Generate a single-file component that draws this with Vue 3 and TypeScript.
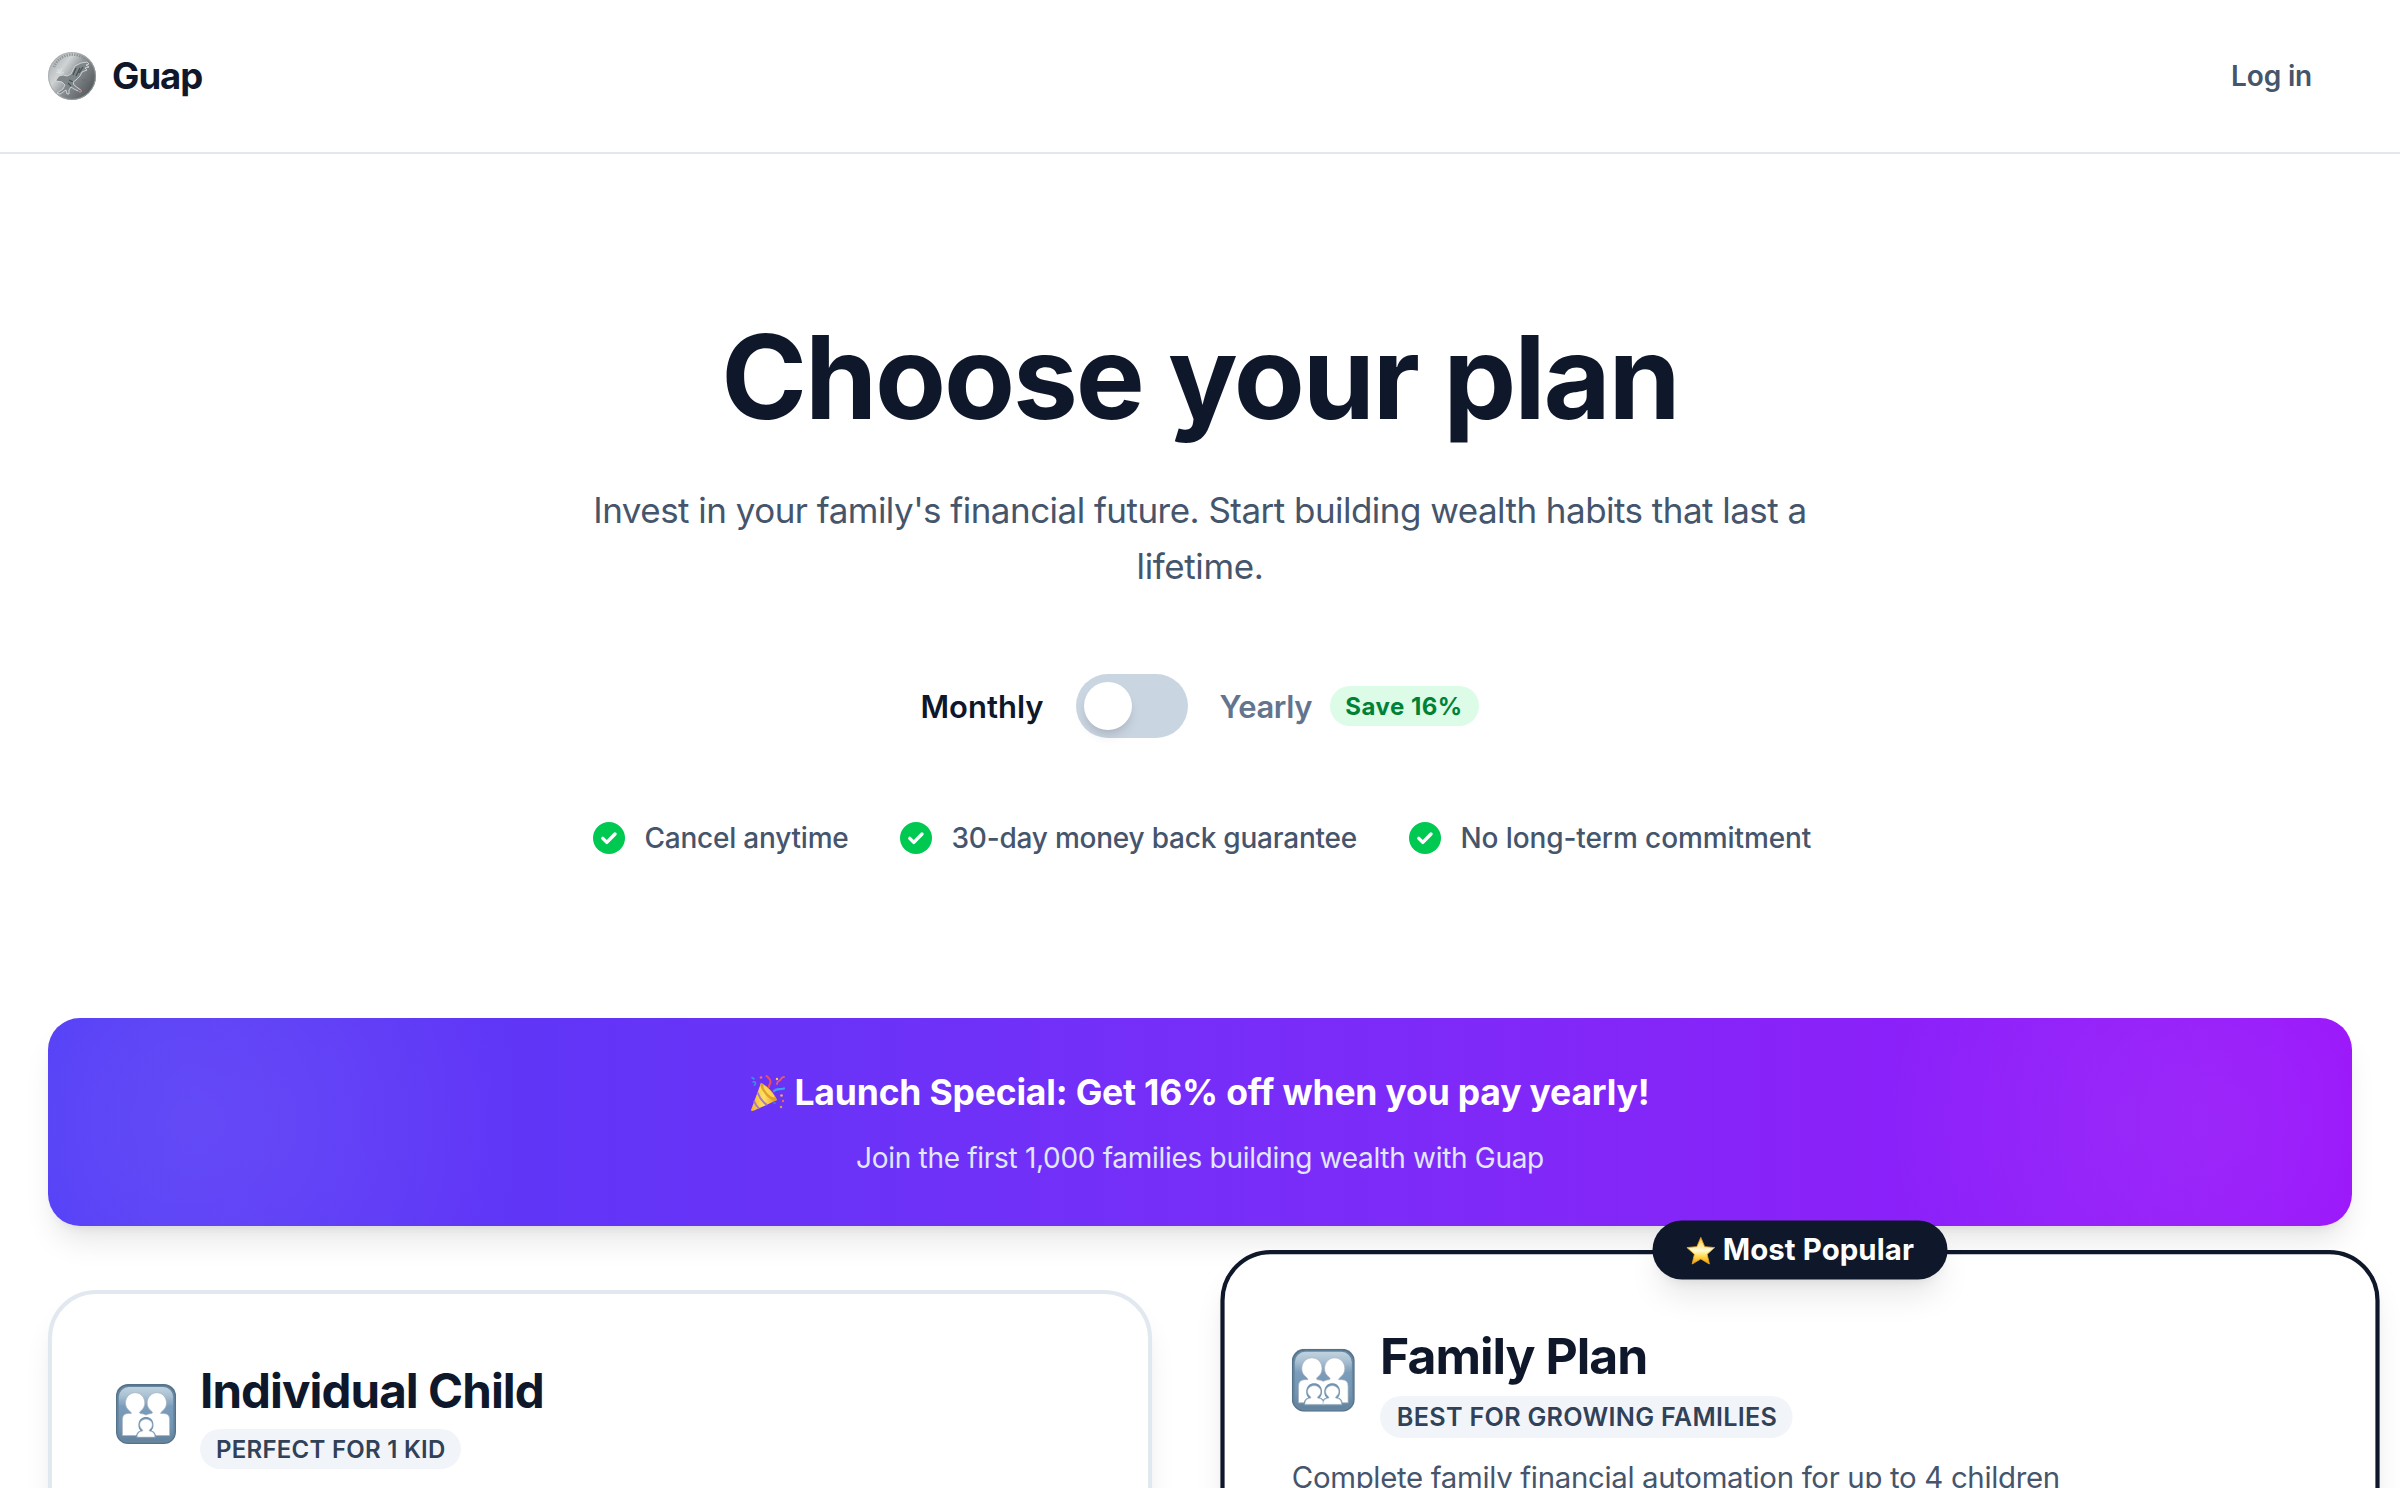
<script setup lang="ts">
import { ref } from 'vue'

interface Plan {
  id: string
  name: string
  tag: string
  kids: number[]
  popular: boolean
  description?: string
}

const yearly = ref(false)

const perks: { label: string; width: number; spacing: number }[] = [
  { label: 'Cancel anytime', width: 255, spacing: -0.22 },
  { label: '30-day money back guarantee', width: 457, spacing: -0.22 },
  { label: 'No long-term commitment', width: 401, spacing: -0.1 },
]

const plans: Plan[] = [
  { id: 'individual', name: 'Individual Child', tag: 'Perfect for 1 kid', kids: [30], popular: false },
  {
    id: 'family',
    name: 'Family Plan',
    tag: 'Best for growing families',
    kids: [21.3, 38.5],
    popular: true,
    description: 'Complete family financial automation for up to 4 children',
  },
]
</script>

<template>
  <div class="page">
    <header class="header">
      <div class="brand">
        <svg class="coin" viewBox="0 0 48 48">
          <defs>
            <linearGradient id="coin" x1="0" y1="0.1" x2="1" y2="0.8">
              <stop offset="0" stop-color="#a3a8aa" />
              <stop offset="0.32" stop-color="#cfd3d4" />
              <stop offset="0.58" stop-color="#858b8e" />
              <stop offset="1" stop-color="#4c5154" />
            </linearGradient>
          </defs>
          <circle cx="24" cy="24" r="24" fill="url(#coin)" />
          <circle cx="24" cy="24" r="23.4" fill="none" stroke="#a4a9ab" stroke-width=".8" />
          <path d="M6 15A20 20 0 0 1 37 7" fill="none" stroke="#7d8386" stroke-width="2.600" stroke-dasharray="1.4 1.1" opacity=".7" />
          <path d="M8 28l3-4 4-1 4 1 4-2 2-4 2-4 6-3 6-1 2 2-3 1 3 2-4 1 2 2-5 2-2 4-4 4-3 2 1 3 4 3 4 3-2 1-6-3-3-2-2 3 0 4-2 0-1-4-6 4-3-1 6-4 2-4-3-3-6-1z" fill="#7f8689" stroke="#dfe2e3" stroke-width=".8" stroke-linejoin="round" />
          <path d="M25 23l3-7M28 24l4-8M31 21l4-6M21 28l4 2M20 31l3 3" stroke="#474d50" stroke-width="1.200" fill="none" />
          <path d="M9 17l3 4 2-5M12 21l-4-1M12 22l4-2M11 17v3" stroke="#dfe3e4" stroke-width=".9" fill="none" />
          <path d="M34 28h8" stroke="#6a7073" stroke-width="2" stroke-dasharray="1.4 .7" />
          <path d="M30 39h6" stroke="#8c5055" stroke-width="1" />
        </svg>
        <span class="brand-name">Guap</span>
      </div>
      <a class="login">Log in</a>
    </header>

    <main>
      <section class="hero">
        <h1>Choose your plan</h1>
        <p class="lead">
          <span class="lead-a">Invest in your family's financial future. Start building wealth habits that last a</span>
          <span class="lead-b">lifetime.</span>
        </p>

        <div class="billing">
          <span class="monthly">Monthly</span>
          <button class="toggle" :class="{ on: yearly }" @click="yearly = !yearly"><i class="knob"></i></button>
          <span class="yearly">Yearly</span>
          <span class="save">Save 16%</span>
        </div>

        <ul class="perks">
          <li v-for="p in perks" :key="p.label" :style="{ width: p.width + 'px', letterSpacing: p.spacing + 'px' }">
            <svg class="check" viewBox="0 0 32 32">
              <circle cx="16" cy="16" r="16" fill="#00c951" />
              <path d="M9.800 16.400l4 4 8.200-8.400" fill="none" stroke="#fff" stroke-width="3.400" stroke-linecap="round" stroke-linejoin="round" />
            </svg>
            <span>{{ p.label }}</span>
          </li>
        </ul>
      </section>

      <section class="banner">
        <h2>
          <svg class="party" viewBox="0 0 36 36">
            <defs>
              <linearGradient id="cone" x1="0" y1="0" x2="1" y2="0">
                <stop offset="0" stop-color="#f3b52c" />
                <stop offset="0.5" stop-color="#ffe066" />
                <stop offset="1" stop-color="#e89a1c" />
              </linearGradient>
            </defs>
            <path d="M1 35L11 8c5 2 13 10 16 17L4 35.600q-3 .8-3-.6z" fill="url(#cone)" />
            <path d="M7.500 17.500q3 8 9.500 12.500M4 26q2 5 5 7.500" fill="none" stroke="#a678c8" stroke-width="2" />
            <path d="M11 8c5 2 13 10 16 17-3 2-8-1-12-6S9.500 9.500 11 8z" fill="#dda02a" />
            <path d="M13.500 10c4 2 9 7 11.500 12.500-3 0-6-2-8.500-5s-3.500-5.500-3-7.500z" fill="#ffd351" />
            <path d="M19 12c0-4 3-4 1-7-.6-1.600-2-2.500-3.500-4" fill="none" stroke="#ef4b5f" stroke-width="2" stroke-linecap="round" />
            <path d="M24 16c3-3 5-1 10-2.500" fill="none" stroke="#3ea0ee" stroke-width="2.200" stroke-linecap="round" />
            <path d="M27 9c0-4 3-2 4-5 .4-1 1.500-2 3-2" fill="none" stroke="#ee5a6b" stroke-width="1.800" stroke-linecap="round" />
            <path d="M3 7c3-1 3 2 1.500 3M2 2.500l2 1.500" fill="none" stroke="#3f8fe0" stroke-width="1.600" stroke-linecap="round" />
            <circle cx="11" cy="2.500" r="1.300" fill="#ef6a70" /><circle cx="27" cy="4" r="1.200" fill="#ffc83d" />
            <circle cx="31.500" cy="20.500" r="1.300" fill="#ffb02e" /><circle cx="24.500" cy="28" r="1.300" fill="#3b7be0" />
            <circle cx="33" cy="26" r="1.200" fill="#ef6a50" /><circle cx="31" cy="32" r="1.200" fill="#d8a03a" />
          </svg>
          <span>Launch Special: Get 16% off when you pay yearly!</span>
        </h2>
        <p>Join the first 1,000 families building wealth with Guap</p>
      </section>

      <section class="plans">
        <article v-for="plan in plans" :key="plan.id" class="card" :class="{ popular: plan.popular }">
          <div v-if="plan.popular" class="ribbon">
            <svg class="star" viewBox="0 0 28 27">
              <defs>
                <linearGradient id="star" x1="0" y1="0" x2="0" y2="1">
                  <stop offset="0" stop-color="#f5b52e" />
                  <stop offset="0.25" stop-color="#ffe48a" />
                  <stop offset="0.5" stop-color="#fffad0" />
                  <stop offset="0.72" stop-color="#ffd84a" />
                  <stop offset="1" stop-color="#f09a08" />
                </linearGradient>
              </defs>
              <path d="M14 1l3.700 8.800 9.500.9-7.100 6.400 2.100 9.300L14 21.500l-8.200 4.900 2.100-9.300L.8 10.700l9.500-.9z" fill="url(#star)" stroke="#e9a722" stroke-width=".8" stroke-linejoin="round" />
            </svg>
            <span>Most Popular</span>
          </div>

          <div class="card-head">
            <svg class="family" viewBox="0 0 60 60">
              <defs>
                <linearGradient :id="'tile-' + plan.id" x1="0" y1="0" x2="0" y2="1">
                  <stop offset="0" stop-color="#c0d2df" />
                  <stop offset="0.16" stop-color="#aac1d3" />
                  <stop offset="0.36" stop-color="#7b9dbb" />
                  <stop offset="0.75" stop-color="#7094b2" />
                  <stop offset="1" stop-color="#64829c" />
                </linearGradient>
              </defs>
              <rect width="60" height="60" rx="12" fill="#55728b" />
              <rect x="1.200" y="1.800" width="57.600" height="57" rx="11" fill="#67869f" />
              <rect x="2.800" y="3" width="54.400" height="54" rx="10" :fill="`url(#tile-${plan.id})`" />
              <path d="M6.400 51.500V35.500q0-6 6-6h3q-.2-1-1.200-2c-3-2.200-4.700-5-4.700-8.500 0-6 4.300-10.300 9.700-10.300S28.800 13 28.800 19c0 3.500-1.700 6.300-4.700 8.500-1 1-.6 1.800.4 2q3 .2 5.500 1.600 2.500-1.400 5.500-1.600c1-.2 1.400-1 .4-2-3-2.200-4.700-5-4.700-8.500 0-6 4.300-10.300 9.600-10.300S50.500 13 50.500 19c0 3.500-1.700 6.300-4.700 8.500-1 1-1.200 2-1.200 2h3q6 0 6 6v16z" fill="#fff" stroke="#a9b3bd" stroke-width=".7" />
              <path v-for="x in plan.kids" :key="'o' + x" :transform="`translate(${x} 0)`" d="M-10 54V53q0-5 4.500-6.500C-9 43.500-8.500 33 0 33S9 43.500 5.500 46.500Q10 48 10 53v1z" fill="#7094b2" />
              <path v-for="x in plan.kids" :key="'k' + x" :transform="`translate(${x} 0)`" d="M-8.800 53q0-5.200 4.800-5.700 1.500-.2.800-1.300c-1.700-1.300-3-3-3-5.200 0-3.200 2.800-5.500 6.200-5.500s6.200 2.300 6.200 5.500c0 2.200-1.300 3.900-3 5.200q-.7 1.100.8 1.300 4.800.5 4.800 5.700z" fill="#fff" stroke="#b4bec8" stroke-width=".5" />
            </svg>
            <div>
              <h3>{{ plan.name }}</h3>
              <span class="chip">{{ plan.tag }}</span>
            </div>
          </div>
          <p v-if="plan.description" class="desc">{{ plan.description }}</p>
        </article>
      </section>
    </main>
  </div>
</template>

<style>
body {
  margin: 0;
  overflow: hidden;
}
</style>

<style scoped>
.page {
  height: 1488px;
  overflow: hidden;
  background: #fff;
  color: #0f172b;
  font-family: Inter, 'Liberation Sans', sans-serif;
  white-space: nowrap;
}
h1,
h2,
h3,
p,
ul {
  margin: 0;
  padding: 0;
}
svg {
  display: block;
  flex: none;
}
.header {
  height: 152px;
  border-bottom: 2px solid #e2e8f0;
  padding: 0 48px;
  display: flex;
  align-items: center;
  justify-content: space-between;
}
.brand {
  display: flex;
  align-items: center;
  gap: 16px;
}
.coin {
  width: 48px;
  height: 48px;
}
.brand-name {
  font-size: 36.5px;
  font-weight: 700;
  letter-spacing: -1px;
}
.login {
  padding-right: 40px;
  color: #45556c;
  font-size: 28px;
  font-weight: 600;
  letter-spacing: -0.17px;
}
.hero {
  display: flex;
  flex-direction: column;
  align-items: center;
  padding-top: 163px;
}
h1 {
  font-size: 116px;
  line-height: 120px;
  font-weight: 700;
  letter-spacing: -2.15px;
}
.lead {
  display: flex;
  flex-direction: column;
  align-items: center;
  margin-top: 45px;
  color: #45556c;
  font-size: 35px;
  line-height: 56px;
}
.lead-a {
  letter-spacing: -0.53px;
}
.lead-b {
  letter-spacing: -0.4px;
}
.billing {
  display: flex;
  align-items: center;
  height: 64px;
  margin-top: 80px;
  font-size: 31px;
  font-weight: 600;
}
.monthly {
  width: 123px;
}
.toggle {
  width: 112px;
  height: 64px;
  margin: 0 32px;
  padding: 8px;
  border: 0;
  border-radius: 32px;
  background: #cad5e2;
}
.toggle.on {
  background: #4f39f6;
}
.knob {
  display: block;
  width: 48px;
  height: 48px;
  border-radius: 50%;
  background: #fff;
  box-shadow: 0 8px 12px -2px rgba(0, 0, 0, 0.1), 0 4px 8px -4px rgba(0, 0, 0, 0.1);
}
.toggle.on .knob {
  margin-left: 48px;
}
.yearly {
  width: 94px;
  color: #62748e;
  letter-spacing: -0.4px;
}
.save {
  box-sizing: border-box;
  width: 149px;
  height: 40px;
  margin: 0 1px 0 16px;
  border-radius: 20px;
  background: #dcfce7;
  color: #008236;
  font-size: 24px;
  line-height: 41px;
  font-weight: 700;
  letter-spacing: 0.48px;
  text-align: center;
}
.perks {
  display: flex;
  gap: 52px;
  margin: 84px 0 0 2px;
  list-style: none;
  color: #45556c;
  font-size: 28px;
  line-height: 32px;
  font-weight: 500;
}
.perks li {
  display: flex;
  gap: 20px;
}
.check {
  width: 32px;
  height: 32px;
}
.banner {
  height: 208px;
  box-sizing: border-box;
  margin: 164px 48px 0;
  padding-top: 47px;
  border-radius: 32px;
  background:
    radial-gradient(circle 330px at 144px 104px, rgba(255, 255, 255, 0.09), rgba(255, 255, 255, 0.065) 35%, rgba(255, 255, 255, 0)),
    radial-gradient(circle 330px at 2160px 104px, rgba(255, 255, 255, 0.07), rgba(255, 255, 255, 0.05) 35%, rgba(255, 255, 255, 0)),
    linear-gradient(90deg in oklab, #4f39f6, #9810fa);
  box-shadow: 0 20px 30px -6px rgba(0, 0, 0, 0.1), 0 8px 12px -8px rgba(0, 0, 0, 0.1);
  color: #fff;
}
.banner h2 {
  display: flex;
  align-items: center;
  justify-content: center;
  gap: 8px;
  font-size: 35.5px;
  line-height: 56px;
  font-weight: 700;
  letter-spacing: -0.18px;
}
.party {
  width: 36px;
  height: 36px;
}
.banner p {
  margin-top: 17px;
  color: #e0e7ff;
  font-size: 28px;
  line-height: 41px;
  letter-spacing: -0.3px;
  text-align: center;
}
.plans {
  display: grid;
  grid-template-columns: 1fr 1fr;
  gap: 96px;
  margin: 64px 48px 0;
}
.card {
  position: relative;
  box-sizing: border-box;
  height: 1600px;
  padding: 65px 64px;
  border: 4px solid #e2e8f0;
  border-radius: 48px;
  background: #fff;
  box-shadow: 0 20px 30px -6px rgba(0, 0, 0, 0.1), 0 8px 12px -8px rgba(0, 0, 0, 0.1);
}
.card.popular {
  border-color: #0f172b;
  transform: translateY(-40px) scale(1.05);
  transform-origin: top center;
}
.ribbon {
  position: absolute;
  top: -32px;
  left: 50%;
  display: flex;
  align-items: center;
  justify-content: center;
  gap: 7px;
  box-sizing: border-box;
  width: 281px;
  height: 56px;
  border-radius: 28px;
  background: #0f172b;
  color: #fff;
  font-size: 28px;
  line-height: 57px;
  font-weight: 700;
  letter-spacing: 0.08px;
  transform: translateX(-50%);
  box-shadow: 0 20px 30px -6px rgba(0, 0, 0, 0.1), 0 8px 12px -8px rgba(0, 0, 0, 0.1);
}
.star {
  width: 28px;
  height: 27px;
}
.card-head {
  display: flex;
  align-items: center;
  gap: 24px;
}
.family {
  width: 60px;
  height: 60px;
  margin-top: -1px;
}
h3 {
  font-size: 47.5px;
  line-height: 64px;
  font-weight: 700;
  letter-spacing: -0.93px;
}
.chip {
  display: block;
  width: fit-content;
  height: 40px;
  margin-top: 6px;
  padding: 0 15px 0 16px;
  border-radius: 20px;
  background: #f1f5f9;
  color: #314158;
  font-size: 24px;
  line-height: 41px;
  font-weight: 600;
  letter-spacing: 0.26px;
  text-transform: uppercase;
}
.desc {
  margin-top: 18px;
  color: #45556c;
  font-size: 28px;
  line-height: 40px;
  letter-spacing: -0.31px;
}
</style>
